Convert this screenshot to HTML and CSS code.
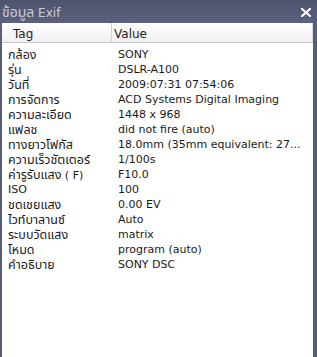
FILE: index.html
```
<!DOCTYPE html>
<html>
<head>
<meta charset="utf-8">
<link rel="stylesheet" href="styles.css">
</head>
<body>
<div class="window">
  <div class="titlebar">
    <span class="title"><span class="th tth">ข้อมูล</span> Exif</span>
    <svg class="close" width="10" height="9" viewBox="0 0 10 9"><path d="M1 1 L9 8 M9 1 L1 8" stroke="#ffffff" stroke-width="2.2" stroke-linecap="square"/></svg>
  </div>
  <div class="panel">
    <div class="header">
      <div class="hcell htag">Tag</div>
      <div class="hcell hval">Value</div>
    </div>
    <div class="rows">
      <div class="row"><span class="tag"><span class="th">กล้อง</span></span><span class="val">SONY</span></div>
      <div class="row"><span class="tag"><span class="th">รุ่น</span></span><span class="val">DSLR-A100</span></div>
      <div class="row"><span class="tag"><span class="th">วันที่</span></span><span class="val">2009:07:31 07:54:06</span></div>
      <div class="row"><span class="tag"><span class="th">การจัดการ</span></span><span class="val">ACD Systems Digital Imaging</span></div>
      <div class="row"><span class="tag"><span class="th">ความละเอียด</span></span><span class="val">1448 x 968</span></div>
      <div class="row"><span class="tag"><span class="th">แฟลช</span></span><span class="val">did not fire (auto)</span></div>
      <div class="row"><span class="tag"><span class="th">ทางยาวโฟกัส</span></span><span class="val">18.0mm (35mm equivalent: 27...</span></div>
      <div class="row"><span class="tag"><span class="th">ความเร็วชัตเตอร์</span></span><span class="val">1/100s</span></div>
      <div class="row"><span class="tag"><span class="th">ค่ารูรับแสง</span> ( F)</span><span class="val">F10.0</span></div>
      <div class="row"><span class="tag">ISO</span><span class="val">100</span></div>
      <div class="row"><span class="tag"><span class="th">ชดเชยแสง</span></span><span class="val">0.00 EV</span></div>
      <div class="row"><span class="tag"><span class="th">ไวท์บาลานซ์</span></span><span class="val">Auto</span></div>
      <div class="row"><span class="tag"><span class="th">ระบบวัดแสง</span></span><span class="val">matrix</span></div>
      <div class="row"><span class="tag"><span class="th">โหมด</span></span><span class="val">program (auto)</span></div>
      <div class="row"><span class="tag"><span class="th">คำอธิบาย</span></span><span class="val">SONY DSC</span></div>
    </div>
  </div>
</div>
</body>
</html>
```
FILE: styles.css
```
html, body {
  margin: 0;
  padding: 0;
  width: 317px;
  height: 357px;
  overflow: hidden;
  background: #565c78;
}
.window {
  width: 317px;
  height: 357px;
  display: flex;
  flex-direction: column;
  background: #585e7b;
  font-family: "DejaVu Sans", "Noto Sans", "Noto Sans Thai", sans-serif;
  font-size: 11px;
  color: #1a1a1a;
}
.th {
  font-size: 12.5px;
}
.tth {
  font-size: 14px;
}
.titlebar {
  height: 23px;
  flex: none;
  display: flex;
  align-items: center;
  justify-content: space-between;
  padding: 0 6px 0 2px;
  background: linear-gradient(#4e5470, #5a607d);
}
.title {
  color: #c9ccd9;
  font-size: 12px;
  line-height: 18px;
  position: relative;
  top: 1px;
}
.close {
  display: block;
  position: relative;
  top: 1px;
}
.panel {
  flex: 1;
  margin: 0 4px 0 2px;
  background: #ffffff;
  display: flex;
  flex-direction: column;
}
.header {
  height: 19px;
  flex: none;
  display: flex;
  align-items: stretch;
  background: linear-gradient(#ffffff, #f0f0f2);
  border-bottom: 1px solid #c9c9cf;
  border-right: 1px solid #d8d8dd;
  font-size: 12px;
  color: #222;
}
.hcell {
  display: flex;
  align-items: center;
  padding-top: 3px;
}
.htag {
  width: 98px;
  padding-left: 11px;
  border-right: 1px solid #d0d0d6;
}
.hval {
  padding-left: 2px;
}
.rows {
  padding-top: 4px;
}
.row {
  display: flex;
  height: 15px;
  line-height: 15px;
  align-items: center;
  white-space: nowrap;
}
.tag {
  width: 110px;
  padding-left: 6px;
  flex: none;
}
.val {
  flex: none;
}
```
